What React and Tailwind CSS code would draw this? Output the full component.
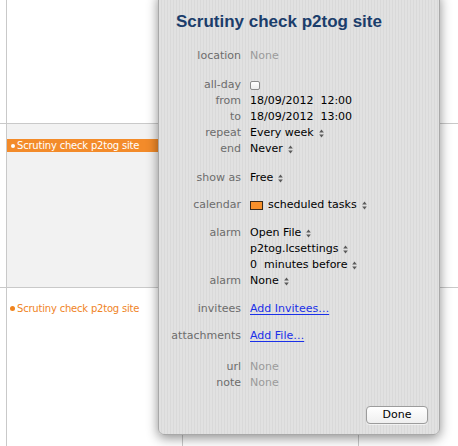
import React from "react";

const Stepper = () => (
  <svg width="5" height="9" viewBox="0 0 5 9" className="ml-[5px] shrink-0">
    <path d="M2.5 0.5 L4.8 3.5 L0.2 3.5 Z" fill="#5a5a5a" />
    <path d="M2.5 8.5 L4.8 5.5 L0.2 5.5 Z" fill="#5a5a5a" />
  </svg>
);

const Row = ({ label, children, className = "" }) => (
  <div className={"flex h-[16px] items-center " + className}>
    <div className="w-[82px] shrink-0 text-right text-[#6c6c6c]">{label}</div>
    <div className="ml-[9px] flex items-center whitespace-nowrap">{children}</div>
  </div>
);

const Gray = ({ children }) => <span className="text-[#9b9b9b]">{children}</span>;

const Link = ({ children }) => (
  <span className="text-[#1a30e8] underline underline-offset-[2px]">{children}</span>
);

export default function App() {
  return (
    <div
      className="relative h-[446px] w-[458px] overflow-hidden bg-white"
      style={{ fontFamily: '"DejaVu Sans", sans-serif' }}
    >
      {/* calendar grid */}
      <div className="grid h-full w-full grid-cols-[6px_176px_176px_1fr] grid-rows-[123px_164px_1fr]">
        <div />
        <div className="border-l border-[#c9c9c9]" />
        <div className="border-l border-[#c9c9c9]" />
        <div className="border-l border-[#c9c9c9]" />

        <div className="border-t border-[#c9c9c9]" />
        <div className="border-l border-t border-[#c9c9c9] bg-[#f2f2f2] pt-[15px]">
          <div className="flex h-[13px] items-center bg-[#f38b2a] pl-[4px] text-[10px] leading-[13px] tracking-[-0.2px] text-white">
            <span className="mr-[2px] inline-block h-[4px] w-[4px] rounded-full bg-white" />
            <span className="whitespace-nowrap">Scrutiny check p2tog site</span>
          </div>
        </div>
        <div className="border-l border-t border-[#c9c9c9]" />
        <div className="border-l border-t border-[#c9c9c9]" />

        <div className="border-t border-[#c9c9c9]" />
        <div className="border-l border-t border-[#c9c9c9] pt-[14px]">
          <div className="flex h-[13px] items-center pl-[3px] text-[10px] leading-[13px] tracking-[-0.2px] text-[#f0841f]">
            <span className="mr-[2px] inline-block h-[5px] w-[5px] rounded-full bg-[#f0841f]" />
            <span className="whitespace-nowrap">Scrutiny check p2tog site</span>
          </div>
        </div>
        <div className="border-l border-t border-[#c9c9c9]" />
        <div className="border-l border-t border-[#c9c9c9]" />
      </div>

      {/* popover */}
      <div className="absolute left-[158px] top-[-8px] flex h-[443px] w-[282px] flex-col rounded-[6px] border border-[#a8a8a8] bg-[repeating-linear-gradient(90deg,#e1e1e1_0px,#e1e1e1_2px,#d9d9d9_2px,#d9d9d9_3px)] pt-[19px] text-[11px] leading-[16px] text-black shadow-[0_3px_12px_rgba(0,0,0,0.45)]">
        <div
          className="h-[20px] pl-[17px] text-[17px] font-bold leading-[20px] text-[#1b3d6b]"
          style={{ fontFamily: '"Liberation Sans", Arial, sans-serif' }}
        >
          Scrutiny check p2tog site
        </div>

        <Row label="location" className="mt-[16px]">
          <Gray>None</Gray>
        </Row>

        <Row label="all-day" className="mt-[13px]">
          <span className="mt-[1px] inline-block h-[9px] w-[10px] rounded-[2px] border border-[#8a8a8a] bg-gradient-to-b from-white to-[#ececec]" />
        </Row>
        <Row label="from">18/09/2012&nbsp;&nbsp;12:00</Row>
        <Row label="to">18/09/2012&nbsp;&nbsp;13:00</Row>
        <Row label="repeat">
          Every week <Stepper />
        </Row>
        <Row label="end">
          Never <Stepper />
        </Row>

        <Row label="show as" className="mt-[13px]">
          Free <Stepper />
        </Row>

        <Row label="calendar" className="mt-[11px]">
          <span className="mr-[5px] inline-block h-[9px] w-[13px] border border-[#3a2a1a] bg-[#f7902b]" />
          scheduled tasks <Stepper />
        </Row>

        <Row label="alarm" className="mt-[12px]">
          Open File <Stepper />
        </Row>
        <Row label="">
          p2tog.lcsettings <Stepper />
        </Row>
        <Row label="">
          0&nbsp;&nbsp;minutes before <Stepper />
        </Row>
        <Row label="alarm">
          None <Stepper />
        </Row>

        <Row label="invitees" className="mt-[12px]">
          <Link>Add Invitees…</Link>
        </Row>
        <Row label="attachments" className="mt-[11px]">
          <Link>Add File…</Link>
        </Row>

        <Row label="url" className="mt-[15px]">
          <Gray>None</Gray>
        </Row>
        <Row label="note">
          <Gray>None</Gray>
        </Row>

        <div className="mt-[15px] flex justify-end pr-[11px]">
          <div className="flex h-[18px] w-[62px] items-center justify-center rounded-[4px] border border-[#9c9c9c] bg-gradient-to-b from-white to-[#efefef] text-[11px] leading-[16px] shadow-[0_1px_0_rgba(255,255,255,0.6)]">
            Done
          </div>
        </div>
      </div>
    </div>
  );
}
